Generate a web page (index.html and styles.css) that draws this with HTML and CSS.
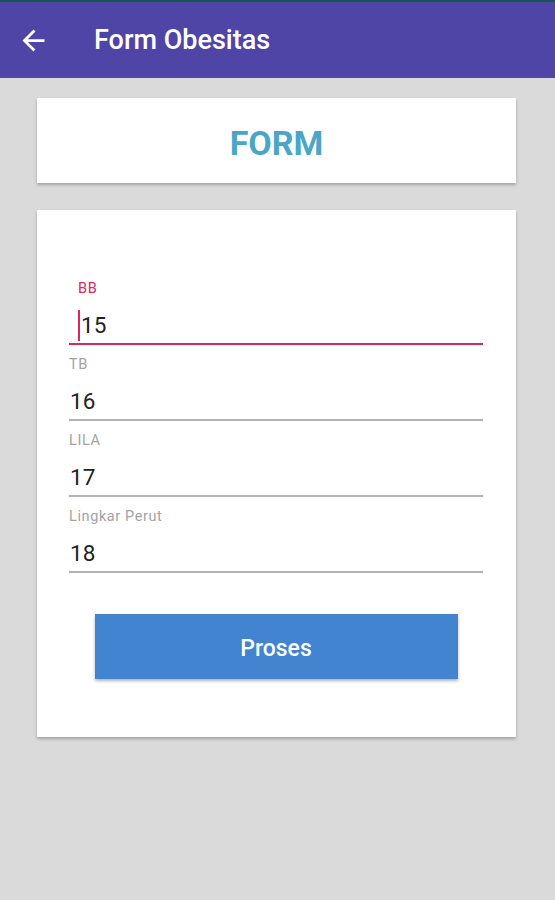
FILE: index.html
```html
<!DOCTYPE html>
<html lang="en">
<head>
  <meta charset="UTF-8" />
  <meta name="viewport" content="width=device-width, initial-scale=1.0"/>
  <title>Form Obesitas</title>
  <link rel="stylesheet" href="styles.css">
</head>
<body>

  <div class="status-line"></div>

  <!-- App bar -->
  <div class="appbar">
    <svg class="back" viewBox="0 0 24 24" width="33" height="33">
      <path d="M20 11H7.83l5.59-5.59L12 4l-8 8 8 8 1.41-1.41L7.83 13H20v-2z" fill="#fff"/>
    </svg>
    <span class="appbar-title">Form Obesitas</span>
  </div>

  <div class="content">

    <div class="card header-card">
      <h2 class="header-text">FORM</h2>
    </div>

    <div class="card form-card">

      <div class="field focused">
        <div class="label">BB</div>
        <div class="value"><span class="cursor"></span>15</div>
      </div>

      <div class="field">
        <div class="label">TB</div>
        <div class="value">16</div>
      </div>

      <div class="field">
        <div class="label">LILA</div>
        <div class="value">17</div>
      </div>

      <div class="field">
        <div class="label">Lingkar Perut</div>
        <div class="value">18</div>
      </div>

      <button class="btn">Proses</button>
    </div>

  </div>

</body>
</html>
```

FILE: styles.css
```css
body {
  margin: 0;
  background: #dadada;
  font-family: Roboto, "Liberation Sans", sans-serif;
  height: 900px;
}

.status-line {
  height: 2px;
  background: #16564c;
}

.appbar {
  height: 76px;
  background: #4f45a7;
  display: flex;
  align-items: center;
  padding-left: 17px;
}

.back {
  display: block;
}

.appbar-title {
  margin-left: 44px;
  color: #fff;
  font-size: 27px;
  font-weight: 500;
}

.content {
  padding: 20px 0 0 37px;
}

.card {
  width: 479px;
  background: #fff;
  box-shadow: 0 2px 3px rgba(0, 0, 0, 0.25);
}

.header-card {
  height: 85px;
  box-sizing: border-box;
  padding-top: 5px;
  display: flex;
  align-items: center;
  justify-content: center;
}

.header-text {
  margin: 0;
  color: #4aa6c6;
  font-size: 34px;
  font-weight: 700;
}

.form-card {
  margin-top: 27px;
  padding: 70px 33px 58px 32px;
  box-sizing: border-box;
  display: flex;
  flex-direction: column;
}

.field {
  margin-bottom: 11px;
}

.label {
  font-size: 14.5px;
  letter-spacing: 0.6px;
  line-height: 18px;
  color: #a3a3a3;
  margin-bottom: 12px;
}

.value {
  font-size: 22.5px;
  line-height: 30px;
  height: 30px;
  color: #222;
  padding-bottom: 3px;
  padding-left: 1px;
  border-bottom: 2px solid #b3b3b3;
  display: flex;
  align-items: center;
}

.focused .label {
  color: #dc2660;
  padding-left: 9px;
}

.focused .value {
  border-bottom-color: #dc2660;
  padding-left: 9px;
}

.cursor {
  width: 2px;
  height: 31px;
  background: #dc2660;
  margin-right: 1px;
}

.btn {
  align-self: center;
  margin-top: 30px;
  width: 363px;
  height: 65px;
  padding-top: 4px;
  background: #4284d0;
  border: none;
  color: #fff;
  font-family: Roboto, "Liberation Sans", sans-serif;
  font-size: 23px;
  font-weight: 500;
  box-shadow: 0 2px 3px rgba(0, 0, 0, 0.3);
  cursor: pointer;
}
```
